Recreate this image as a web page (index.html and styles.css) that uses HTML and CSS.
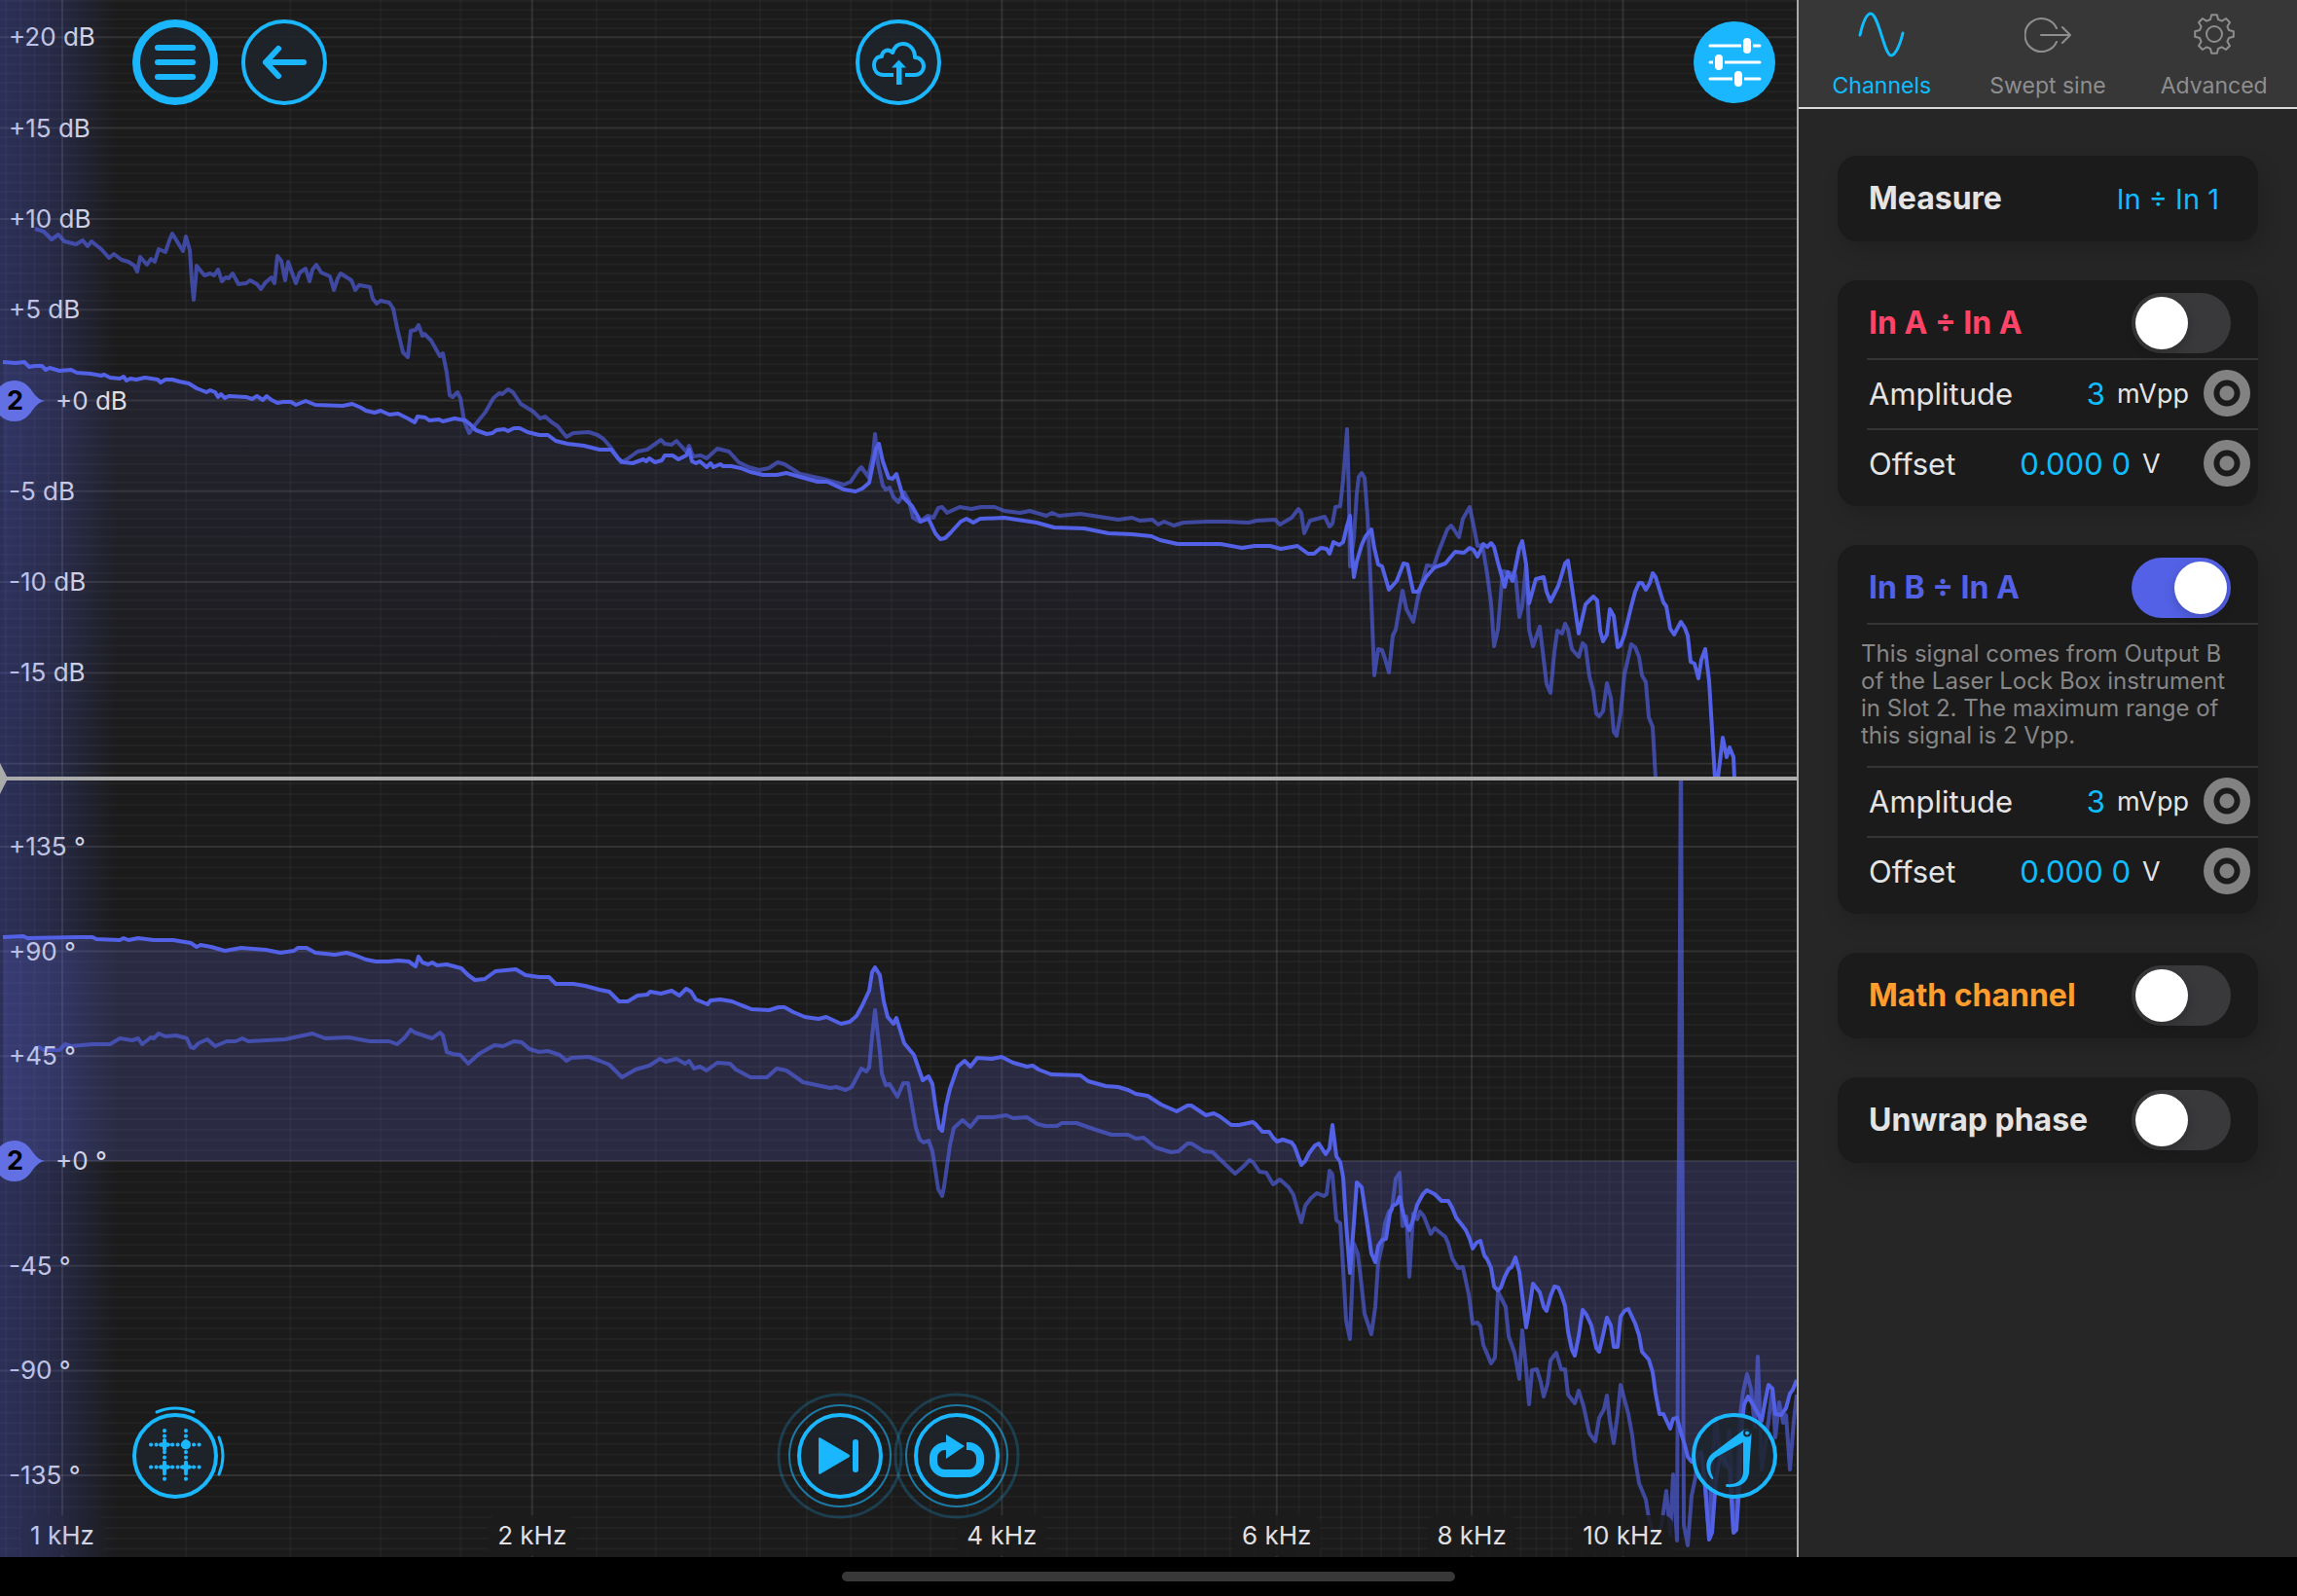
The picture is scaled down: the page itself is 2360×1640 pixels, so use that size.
FILE: index.html
```html
<!DOCTYPE html>
<html lang="en">
<head>
    <meta charset="UTF-8">
    <meta name="viewport" content="width=device-width, initial-scale=1.0">
    <title>Frequency Response Analyzer</title>
    <link rel="stylesheet" href="styles.css">
</head>
<body>
    <div class="app">
        <main class="plots">
            <section class="plot" id="magnitude" aria-label="Magnitude">
                <svg class="plot-svg" viewBox="0 0 1846 798" preserveAspectRatio="none">
                    <defs>
                        <linearGradient id="magFill" gradientUnits="userSpaceOnUse" x1="0" y1="370" x2="0" y2="798">
                            <stop offset="0" stop-color="#6b70e8" stop-opacity="0.1"/>
                            <stop offset="1" stop-color="#6b70e8" stop-opacity="0"/>
                        </linearGradient>
                    </defs>
                    <g class="grid"></g>
                    <path class="area" fill="url(#magFill)"/>
                    <polyline class="trace ghost" points="36,235 45,238 53,246 60,241 66,248 78,251 85,247 90,253 94,248 104,256 112,265 117,261 125,267 132,269 138,273 141,279 144,264 151,272 155,266 159,269 163,256 170,259 174,247 177,240 188,258 191,243 195,257 197,287 199,308 201,287 202,273 210,283 216,281 220,283 224,277 228,289 232,285 235,286 239,281 245,292 253,291 257,288 264,292 268,297 273,290 279,285 282,291 285,263 289,268 293,288 296,269 301,283 304,291 308,280 314,276 318,289 321,277 325,272 330,280 339,284 343,298 347,286 350,281 361,288 365,298 369,293 380,295 383,307 387,312 391,309 400,311 404,317 408,337 414,362 419,367 422,340 427,339 430,334 434,345 436,343 443,350 452,366 455,363 459,383 462,406 465,408 470,403 473,409 477,433 482,445 487,438 499,423 507,409 513,404 516,405 522,400 527,403 535,415 548,423 555,430 560,428 567,434 573,438 582,449 589,445 605,444 614,447 620,451 627,459 638,475 644,472 655,464 665,462 679,452 683,456 690,457 695,453 705,464 708,458 712,469 720,468 726,471 737,461 749,464 759,475 769,480 780,483 790,481 799,475 806,477 822,487 845,492 867,498 874,495 882,483 885,480 892,490 897,467 899,446 902,476 907,499 910,503 914,501 918,511 923,516 929,506 934,515 938,532 945,536 953,530 959,532 964,522 968,521 973,527 986,521 998,523 1008,521 1022,521 1032,525 1048,527 1058,525 1075,530 1081,527 1088,530 1110,528 1149,534 1163,532 1171,535 1184,534 1190,539 1196,536 1206,540 1216,537 1240,536 1260,536 1283,537 1291,535 1310,534 1315,539 1327,532 1334,523 1337,527 1340,548 1346,535 1361,531 1366,541 1369,538 1372,521 1377,520 1380,493 1384,441 1386,513 1387,582 1391,553 1394,507 1396,490 1399,486 1402,491 1405,530 1408,593 1412,694 1416,667 1420,668 1423,677 1427,691 1431,653 1434,647 1438,623 1441,607 1445,626 1452,639 1457,613 1466,581 1473,582 1478,567 1487,544 1491,540 1499,552 1503,533 1510,521 1514,540 1518,561 1523,560 1528,590 1532,620 1535,664 1539,647 1544,587 1550,588 1557,591 1561,634 1564,623 1568,580 1571,647 1575,664 1582,644 1589,703 1593,712 1597,670 1600,648 1605,651 1608,641 1611,647 1615,667 1622,675 1626,661 1629,664 1633,695 1637,710 1640,733 1643,736 1647,731 1651,702 1655,717 1658,752 1661,756 1665,733 1669,693 1676,662 1680,665 1684,675 1687,694 1691,701 1694,737 1698,747 1701,800"/>
                    <polyline class="trace live" points="3,372 16,373 25,372 30,377 36,376 43,376 47,380 51,378 61,381 73,380 79,383 93,384 104,386 107,385 113,388 123,389 127,387 130,391 134,389 140,390 149,388 162,390 165,393 170,390 177,390 184,392 194,394 202,399 212,403 216,401 221,403 224,408 227,405 231,409 235,407 253,408 259,410 264,407 270,411 274,407 279,411 285,414 291,413 299,413 304,416 314,412 324,416 352,417 362,415 371,419 376,422 385,424 391,422 400,426 409,425 419,430 426,434 429,428 437,429 441,432 451,431 455,433 467,430 478,432 482,435 489,442 500,446 506,445 510,442 518,441 522,443 528,440 534,440 542,444 554,447 563,447 571,453 583,456 600,458 616,462 628,462 635,471 640,475 650,476 661,472 664,474 667,471 673,475 680,473 683,468 691,468 697,472 705,468 708,462 711,474 715,476 719,474 726,480 730,476 733,480 740,477 743,479 751,479 761,481 771,485 784,488 798,488 808,486 822,490 840,495 850,495 867,503 879,505 886,502 893,496 897,476 900,461 903,456 907,474 913,491 917,492 921,487 928,511 937,520 946,536 954,533 961,548 966,554 971,553 977,547 987,536 993,533 1000,537 1007,533 1032,532 1045,534 1065,537 1083,542 1114,543 1139,548 1163,549 1183,551 1192,555 1210,559 1240,559 1254,559 1276,563 1289,561 1305,561 1316,564 1333,561 1344,569 1350,569 1357,563 1363,564 1366,569 1370,557 1376,560 1380,557 1384,540 1387,530 1389,567 1391,593 1394,577 1399,560 1403,551 1409,544 1412,563 1416,580 1420,582 1427,606 1435,597 1442,579 1446,580 1452,608 1457,608 1465,593 1474,583 1485,579 1495,567 1504,568 1510,563 1514,565 1518,572 1524,559 1528,562 1532,558 1535,562 1539,578 1546,603 1549,588 1554,597 1557,583 1561,563 1564,556 1568,580 1571,620 1578,595 1586,593 1589,608 1593,618 1601,602 1608,579 1611,576 1615,603 1622,651 1629,621 1637,613 1641,617 1644,648 1647,659 1651,652 1654,626 1658,633 1662,665 1665,663 1669,652 1676,623 1680,608 1684,599 1687,599 1691,606 1695,599 1698,589 1701,593 1709,619 1712,623 1716,646 1720,652 1727,639 1731,645 1734,653 1737,680 1741,682 1745,697 1748,678 1752,667 1756,700 1762,800 1765,800 1770,758 1774,778 1777,768 1781,778 1782,800"/>
                </svg>
            </section>

            <div class="divider"></div>

            <section class="plot" id="phase" aria-label="Phase">
                <svg class="plot-svg" viewBox="0 802 1846 798" preserveAspectRatio="none">
                    <g class="grid"></g>
                    <path class="area" fill="#6b70e8" fill-opacity="0.2"/>
                    <polyline class="trace ghost" points="36,1078 40,1076 45,1079 61,1079 67,1073 73,1075 95,1073 113,1073 123,1067 136,1069 142,1067 146,1073 155,1066 158,1067 163,1062 170,1065 181,1064 192,1067 196,1076 199,1077 204,1072 213,1068 221,1075 233,1070 242,1070 249,1067 255,1070 293,1068 302,1066 321,1062 334,1067 358,1066 380,1070 400,1070 408,1073 416,1066 422,1058 426,1061 435,1064 444,1067 452,1061 455,1064 459,1081 465,1083 473,1084 481,1093 492,1083 508,1074 517,1075 528,1070 536,1071 544,1078 554,1081 563,1080 575,1084 582,1090 587,1087 605,1086 616,1090 626,1094 639,1107 653,1099 667,1095 678,1088 684,1091 695,1088 704,1093 708,1090 713,1098 719,1096 726,1100 737,1092 750,1093 756,1099 771,1107 788,1107 798,1098 808,1100 825,1112 853,1118 859,1117 869,1120 875,1117 885,1098 890,1101 893,1097 896,1065 899,1038 904,1081 906,1103 910,1115 914,1114 922,1127 928,1113 933,1113 937,1136 941,1159 945,1171 949,1174 954,1172 958,1183 964,1222 968,1229 970,1219 976,1177 980,1159 989,1151 997,1158 1005,1148 1021,1148 1034,1146 1041,1149 1055,1148 1066,1155 1074,1157 1086,1157 1091,1154 1106,1154 1126,1161 1142,1166 1159,1166 1167,1170 1175,1169 1187,1179 1203,1184 1211,1183 1220,1175 1224,1175 1237,1183 1246,1184 1252,1190 1269,1206 1277,1199 1284,1192 1288,1195 1294,1204 1301,1205 1308,1217 1315,1212 1324,1220 1329,1228 1333,1243 1337,1256 1341,1239 1347,1231 1353,1226 1360,1229 1363,1227 1366,1203 1369,1207 1373,1254 1377,1257 1380,1303 1383,1357 1387,1376 1389,1327 1391,1278 1395,1288 1398,1313 1402,1350 1409,1371 1413,1343 1416,1297 1420,1280 1423,1257 1427,1245 1430,1243 1434,1211 1438,1205 1441,1260 1445,1250 1448,1312 1452,1247 1456,1253 1459,1245 1463,1250 1470,1268 1474,1262 1485,1271 1488,1278 1492,1293 1498,1303 1503,1302 1509,1330 1513,1360 1518,1359 1521,1363 1524,1382 1532,1401 1536,1395 1539,1327 1547,1343 1550,1373 1556,1390 1561,1417 1564,1367 1568,1407 1571,1443 1574,1408 1579,1407 1583,1420 1586,1435 1590,1422 1593,1398 1599,1390 1604,1407 1608,1407 1611,1433 1618,1442 1622,1429 1627,1445 1633,1473 1639,1481 1643,1457 1648,1448 1651,1434 1654,1460 1658,1483 1662,1453 1665,1423 1673,1453 1677,1475 1680,1500 1684,1524 1691,1541 1694,1560 1700,1580 1707,1568 1712,1532 1716,1577 1719,1515 1723,1583 1727,750 1730,1567 1734,1588 1738,1537 1742,1518 1745,1493 1748,1493 1752,1530 1756,1580 1759,1510 1763,1460 1767,1493 1772,1507 1777,1470 1781,1573 1784,1560 1788,1453 1791,1430 1795,1412 1799,1427 1803,1467 1806,1394 1810,1510 1813,1490 1817,1460 1821,1427 1824,1477 1828,1441 1832,1462 1835,1454 1839,1510 1843,1460 1846,1433"/>
                    <polyline class="trace live" points="3,963 24,962 28,964 79,963 95,963 99,965 123,966 127,964 132,966 142,964 158,966 178,966 196,969 202,973 206,971 217,973 231,977 248,974 273,976 288,979 302,977 306,974 315,974 324,979 344,981 356,979 366,982 376,986 386,988 399,988 409,987 420,988 427,993 430,983 434,989 440,991 444,989 449,992 459,991 474,995 481,1002 488,1007 498,1006 509,998 530,996 540,1002 554,1004 564,1004 571,1011 589,1011 601,1013 616,1017 626,1019 636,1029 645,1029 655,1023 665,1022 668,1019 679,1021 690,1018 698,1023 705,1016 710,1019 715,1027 727,1032 730,1028 740,1027 752,1029 772,1037 790,1038 800,1035 806,1035 815,1040 827,1045 841,1047 849,1045 864,1052 873,1050 880,1044 886,1033 893,1018 896,999 899,994 904,1002 908,1029 912,1045 918,1052 921,1046 929,1072 939,1084 948,1110 954,1106 958,1114 961,1136 965,1159 968,1162 972,1136 976,1119 984,1096 991,1090 997,1096 1004,1087 1019,1088 1029,1086 1041,1092 1055,1096 1061,1095 1067,1099 1080,1104 1110,1105 1118,1111 1136,1116 1149,1117 1159,1120 1167,1124 1179,1126 1193,1135 1209,1142 1220,1136 1224,1136 1230,1140 1239,1146 1247,1144 1253,1147 1265,1156 1273,1156 1287,1153 1290,1155 1297,1163 1304,1163 1308,1169 1312,1173 1318,1171 1327,1174 1330,1178 1337,1197 1341,1193 1345,1185 1351,1177 1355,1175 1362,1186 1366,1180 1369,1156 1373,1188 1377,1194 1380,1210 1383,1257 1387,1308 1391,1257 1394,1215 1399,1220 1404,1253 1409,1288 1413,1297 1416,1280 1420,1274 1424,1273 1428,1247 1431,1239 1435,1237 1438,1230 1442,1248 1445,1258 1448,1264 1452,1253 1456,1238 1462,1227 1466,1223 1474,1227 1481,1234 1488,1234 1492,1241 1496,1251 1506,1264 1510,1273 1513,1283 1517,1277 1521,1275 1525,1290 1528,1294 1532,1303 1535,1322 1539,1326 1542,1323 1546,1312 1550,1304 1553,1302 1557,1292 1561,1307 1568,1364 1571,1347 1575,1319 1582,1328 1586,1343 1589,1347 1593,1332 1597,1322 1601,1323 1604,1330 1608,1342 1611,1368 1615,1387 1618,1393 1622,1373 1626,1346 1630,1351 1635,1362 1640,1385 1643,1389 1647,1372 1651,1354 1655,1362 1658,1384 1662,1384 1665,1353 1669,1347 1673,1345 1680,1360 1684,1372 1687,1389 1694,1397 1698,1410 1701,1432 1705,1453 1709,1453 1716,1468 1719,1458 1723,1457 1727,1472 1731,1485 1734,1497 1738,1502 1748,1492 1752,1527 1756,1582 1759,1575 1763,1520 1768,1493 1777,1510 1781,1575 1784,1572 1787,1527 1790,1460 1792,1443 1796,1435 1802,1445 1810,1460 1813,1443 1817,1423 1821,1427 1824,1453 1830,1454 1835,1447 1839,1432 1842,1428 1846,1418"/>
                </svg>
            </section>

            <div class="toolbar toolbar-top">
                <div class="group group-left">
                    <button class="round" type="button" aria-label="Menu">
                        <svg viewBox="0 0 88 88"><circle class="disc" cx="44" cy="44" r="40" stroke-width="8"/><path d="M26 29H62M26 44H62M26 59H62" stroke-width="6"/></svg>
                    </button>
                    <button class="round" type="button" aria-label="Back">
                        <svg viewBox="0 0 88 88"><circle class="disc" cx="44" cy="44" r="42"/><path d="M64 44H25M38 30L25 44L38 58" stroke-width="6"/></svg>
                    </button>
                </div>
                <div class="group">
                    <button class="round" type="button" aria-label="Upload">
                        <svg viewBox="0 0 88 88"><circle class="disc" cx="44" cy="44" r="42"/><path d="M39 57H29C22 57 19 52 19 47C19 42 22 38 27 38C27 33 33 29 38 34C40 28 44 25 48.5 25C56 25 61 31 61 39C66 39 70 43 70 48C70 53 66 57 61 57H51" stroke-width="4" stroke-linecap="butt"/><path class="solid" d="M44.5 41.5L52 49.5H47.5V67H42V49.5H37Z"/></svg>
                    </button>
                </div>
                <div class="group group-right">
                    <button class="round" type="button" aria-label="Settings">
                        <svg class="sliders" viewBox="0 0 88 88"><circle class="solid" cx="44" cy="44" r="42"/><path d="M19 27H70M19 44H70M19 61H70" stroke-width="3"/><rect x="52" y="18" width="10" height="18" rx="5"/><rect x="23" y="35" width="10" height="18" rx="5"/><rect x="43" y="52" width="10" height="18" rx="5"/></svg>
                    </button>
                </div>
            </div>

            <div class="toolbar toolbar-bottom">
                <div class="group group-left">
                    <button class="round" type="button" aria-label="Grid">
                        <svg viewBox="0 0 88 88"><circle class="disc" cx="44" cy="44" r="42"/><path d="M33 18V71M55 18V71M19 32.5H72M19 55.5H72" stroke-width="4" stroke-dasharray="0.2 5.3"/><path d="M33 28V37M33 51V60M55 51V60M29 32.5H37M29 55.5H37M51 55.5H59" stroke-width="4"/><circle class="solid" cx="55" cy="32.5" r="5"/><path d="M25 -1A49 49 0 0 1 63 -1M89 25A49 49 0 0 1 89 63" stroke-width="3"/></svg>
                    </button>
                </div>
                <div class="group group-center">
                    <button class="round" type="button" aria-label="Single sweep">
                        <svg viewBox="0 0 88 88"><circle class="ring ring-far" cx="44" cy="44" r="63"/><circle class="ring" cx="44" cy="44" r="52"/><circle class="disc" cx="44" cy="44" r="42"/><path class="solid" d="M22 26.5Q22 24.5 24 25.5L53 42.5Q55 44 53 45.5L24 62.5Q22 63.5 22 61.5Z"/><path d="M60 30V58" stroke-width="6"/></svg>
                    </button>
                    <button class="round" type="button" aria-label="Continuous sweep">
                        <svg viewBox="0 0 88 88"><circle class="ring ring-far" cx="44" cy="44" r="63"/><circle class="ring" cx="44" cy="44" r="52"/><circle class="disc" cx="44" cy="44" r="42"/><path d="M54 34H56A12 12 0 0 1 68 46V50A12 12 0 0 1 56 62H32A12 12 0 0 1 20 50V46A12 12 0 0 1 32 34H38" stroke-width="8" stroke-linecap="butt"/><path class="solid" d="M33 22L52 34L33 47Z"/></svg>
                    </button>
                </div>
                <div class="group group-right">
                    <button class="round" type="button" aria-label="Measurements">
                        <svg viewBox="0 0 88 88"><circle class="disc" cx="44" cy="44" r="42"/><path class="solid" d="M54 17L22 41C14 47 13 58 20 67Q22 69 22.500 67C18 59 18 51 25 45.500L53 30L53 60C53 69 46 74 36 73Q34 74.500 36 76C49 77 58 72 59 61L61.500 22Q60 15 54 17Z"/><circle class="pivot" cx="57" cy="20.500" r="3"/></svg>
                    </button>
                </div>
            </div>
        </main>

        <aside class="sidebar">
            <nav class="tabs">
                <button class="tab active" type="button">
                    <svg viewBox="0 0 48 48"><path d="M2 25C5 12 9 3 13 3C21 3 27 46 34 46C38 46 43 36 46 23" stroke-width="3"/></svg>
                    Channels
                </button>
                <button class="tab" type="button">
                    <svg viewBox="0 0 48 48"><path d="M33 18A17 17 0 1 0 33 32M17 25H47M39 17L47 25L39 33" stroke-width="2"/></svg>
                    Swept sine
                </button>
                <button class="tab" type="button">
                    <svg viewBox="0 0 48 48"><path id="gear" stroke-width="2"/><circle cx="24" cy="24" r="8" stroke-width="2"/></svg>
                    Advanced
                </button>
            </nav>

            <div class="cards">
                <section class="card">
                    <div class="row">
                        <h2>Measure</h2>
                        <button class="choice" type="button">In ÷ In 1</button>
                    </div>
                </section>

                <section class="card">
                    <div class="row">
                        <label class="title channel-a" for="chA">In A ÷ In A</label>
                        <input class="toggle" type="checkbox" id="chA">
                    </div>
                    <div class="row param">
                        <label for="ampA">Amplitude</label>
                        <input class="value" type="text" id="ampA" value="3">
                        <span class="unit">mVpp</span>
                        <button class="knob" type="button" aria-label="Adjust amplitude"></button>
                    </div>
                    <div class="row param">
                        <label for="offA">Offset</label>
                        <input class="value" type="text" id="offA" value="0.000 0">
                        <span class="unit">V</span>
                        <button class="knob" type="button" aria-label="Adjust offset"></button>
                    </div>
                </section>

                <section class="card">
                    <div class="row">
                        <label class="title channel-b" for="chB">In B ÷ In A</label>
                        <input class="toggle" type="checkbox" id="chB" checked>
                    </div>
                    <p class="note">This signal comes from Output B of the Laser Lock Box instrument in Slot 2. The maximum range of this signal is 2 Vpp.</p>
                    <div class="row param">
                        <label for="ampB">Amplitude</label>
                        <input class="value" type="text" id="ampB" value="3">
                        <span class="unit">mVpp</span>
                        <button class="knob" type="button" aria-label="Adjust amplitude"></button>
                    </div>
                    <div class="row param">
                        <label for="offB">Offset</label>
                        <input class="value" type="text" id="offB" value="0.000 0">
                        <span class="unit">V</span>
                        <button class="knob" type="button" aria-label="Adjust offset"></button>
                    </div>
                </section>

                <section class="card">
                    <div class="row">
                        <label class="title channel-math" for="math">Math channel</label>
                        <input class="toggle" type="checkbox" id="math">
                    </div>
                </section>

                <section class="card">
                    <div class="row">
                        <label class="title" for="unwrap">Unwrap phase</label>
                        <input class="toggle" type="checkbox" id="unwrap">
                    </div>
                </section>
            </div>
        </aside>
    </div>
    <footer class="home-bar"><div class="home-indicator"></div></footer>

    <script src="script.js"></script>
</body>
</html>
```

FILE: styles.css
```css
* {
    box-sizing: border-box;
}

body {
    margin: 0;
    height: 100vh;
    display: flex;
    flex-direction: column;
    background: #000;
    color: #e4e4e4;
    font-family: Inter, "Liberation Sans", sans-serif;
    overflow: hidden;
}

button, input {
    font-family: inherit;
    margin: 0;
    padding: 0;
    border: none;
    background: none;
    color: inherit;
}

.app {
    flex: 1;
    min-height: 0;
    display: grid;
    grid-template-columns: 1fr 514px;
}

/* Plots */
.plots {
    position: relative;
    display: flex;
    flex-direction: column;
    min-width: 0;
    background: #1b1b1b;
}

.plot {
    position: relative;
    flex: 1;
    min-height: 0;
    overflow: hidden;
}

/* Blue shade along the scale, drawn over its labels */
.plot::after {
    content: "";
    position: absolute;
    inset: 0 auto 0 0;
    z-index: 1;
    width: 120px;
    background: linear-gradient(to right, rgba(83, 97, 230, 0.3), rgba(83, 97, 230, 0.2) 50%, rgba(83, 97, 230, 0));
    pointer-events: none;
}

.plot-svg {
    display: block;
    width: 100%;
    height: 100%;
}

.grid line {
    stroke: #fff;
    stroke-width: 2;
    stroke-opacity: 0.03;
    vector-effect: non-scaling-stroke;
}

.grid .major {
    stroke-opacity: 0.1;
}

.trace {
    fill: none;
    stroke: #5361e6;
    stroke-width: 4;
    stroke-linejoin: round;
    vector-effect: non-scaling-stroke;
}

.ghost {
    stroke-opacity: 0.65;
}

.divider {
    position: relative;
    flex: none;
    height: 4px;
    background: #aaa;
}

.divider::before {
    content: "";
    position: absolute;
    left: 0;
    top: -14px;
    z-index: 2;
    width: 8px;
    height: 32px;
    background: #aaa;
    clip-path: polygon(0 0, 100% 50%, 0 100%);
}

.y-label, .x-label {
    position: absolute;
    z-index: 1;
    font-size: 26px;
    line-height: 42px;
    white-space: nowrap;
    color: #e0e0e4;
}

.y-label {
    left: 9px;
    transform: translateY(-50%);
}

.y-label.zero {
    left: 57px;
}

.x-label {
    bottom: 1px;
    padding: 0 10px;
    border-radius: 10px;
    background: rgba(27, 27, 27, 0.85);
    transform: translateX(-50%);
}

.marker {
    position: absolute;
    left: 0;
    z-index: 2;
    width: 46px;
    height: 42px;
    padding-left: 7px;
    transform: translateY(-50%);
    color: #000;
    font-size: 27px;
    font-weight: 700;
    line-height: 42px;
}

.marker svg {
    position: absolute;
    inset: 0;
    z-index: -1;
    fill: #6270e4;
}

/* Round buttons */
.toolbar {
    position: absolute;
    left: 20px;
    right: 20px;
    z-index: 3;
    display: grid;
    grid-template-columns: 1fr auto 1fr;
}

.toolbar-top {
    top: 20px;
}

.toolbar-bottom {
    bottom: 60px;
}

.group {
    display: flex;
    gap: 24px;
}

.group-left {
    padding-left: 116px;
}

.group-center {
    gap: 32px;
}

.group-right {
    justify-content: flex-end;
}

.round {
    width: 88px;
    height: 88px;
    border-radius: 50%;
    cursor: pointer;
}

.round svg {
    display: block;
    overflow: visible;
    fill: none;
    stroke: #1ab7ff;
    stroke-width: 4;
    stroke-linecap: round;
    stroke-linejoin: round;
}

.round .disc {
    fill: rgba(29, 36, 43, 0.85);
}

.round .solid {
    fill: #1ab7ff;
    stroke: none;
}

.round .ring {
    stroke-width: 2;
    stroke-opacity: 0.6;
}

.round .ring-far {
    stroke-width: 3;
    stroke-opacity: 0.22;
}

.round .pivot {
    fill: #1ab7ff;
    stroke: #1d242b;
    stroke-width: 2;
}

.round .sliders {
    stroke: #fff;
}

.sliders rect {
    fill: #fff;
    stroke: #1ab7ff;
    stroke-width: 2;
}

/* Sidebar */
.sidebar {
    display: flex;
    flex-direction: column;
    border-left: 2px solid #aaa;
    background: #262626;
}

.tabs {
    display: grid;
    grid-template-columns: repeat(3, 1fr);
    height: 112px;
    border-bottom: 2px solid #d8d8d8;
    background: #373737;
}

.tab {
    display: flex;
    flex-direction: column;
    align-items: center;
    gap: 15px;
    padding-top: 11px;
    color: #8e8e8e;
    font-size: 23px;
    line-height: 28px;
    cursor: pointer;
}

.tab svg {
    width: 48px;
    height: 48px;
    fill: none;
    stroke: currentColor;
    stroke-linecap: round;
    stroke-linejoin: round;
}

.tab.active {
    color: #0fbdff;
}

.cards {
    display: flex;
    flex-direction: column;
    gap: 40px;
    padding: 48px 40px;
}

.card {
    padding: 8px 0;
    border-radius: 20px;
    background: #1b1b1b;
    box-shadow: 6px 10px 20px rgba(0, 0, 0, 0.15);
}

.row {
    display: flex;
    align-items: center;
    justify-content: space-between;
    height: 72px;
    padding: 0 28px 0 32px;
}

h2, .title {
    margin: 0;
    font-size: 32px;
    font-weight: 700;
    line-height: 40px;
}

.channel-a {
    color: #ff4468;
}

.channel-b {
    color: #5361e6;
}

.channel-math {
    color: #ff9e2f;
}

.choice {
    padding-right: 12px;
    color: #0fbdff;
    font-size: 29px;
    cursor: pointer;
}

.toggle {
    appearance: none;
    flex: none;
    width: 102px;
    height: 62px;
    border-radius: 31px;
    background: #39393b;
    cursor: pointer;
}

.toggle::before {
    content: "";
    display: block;
    width: 54px;
    height: 54px;
    margin: 4px;
    border-radius: 50%;
    background: #fff;
    box-shadow: 0 4px 12px rgba(0, 0, 0, 0.2);
}

.toggle:checked {
    background: #5361e6;
}

.toggle:checked::before {
    margin-left: 44px;
}

.param {
    padding: 0 8px 2px 2px;
    margin-left: 30px;
    border-top: 2px solid #343434;
    font-size: 31px;
}

.value {
    flex: 1;
    min-width: 0;
    color: #0fbdff;
    font-size: 31px;
    text-align: right;
}

.unit {
    min-width: 48px;
    margin: 0 15px 0 12px;
    font-size: 27px;
}

.knob {
    flex: none;
    width: 48px;
    height: 48px;
    border-radius: 50%;
    background: radial-gradient(circle, #828282 7px, #1b1b1b 8px, #1b1b1b 13px, #828282 14px);
    cursor: pointer;
}

.note {
    margin: 0 0 0 24px;
    padding: 0 20px 17px 0;
    color: #868686;
    font-size: 24px;
    line-height: 28px;
}

.note::before {
    content: "";
    display: block;
    height: 2px;
    margin: 0 -20px 16px 6px;
    background: #343434;
}

/* Bottom of the screen */
.home-bar {
    display: flex;
    justify-content: center;
    align-items: center;
    height: 40px;
}

.home-indicator {
    width: 630px;
    height: 10px;
    border-radius: 5px;
    background: #383838;
}
```

FILE: script.js
```js
const SVG = "http://www.w3.org/2000/svg";
const WIDTH = 1846;
const HEIGHT = 798;

// Log frequency axis, kHz
function freqToX(f) {
    return 64 + Math.log2(f) * 482.7;
}

function addLine(group, x1, y1, x2, y2, major) {
    const line = document.createElementNS(SVG, "line");
    line.setAttribute("x1", x1);
    line.setAttribute("y1", y1);
    line.setAttribute("x2", x2);
    line.setAttribute("y2", y2);
    if (major) line.setAttribute("class", "major");
    group.appendChild(line);
}

function addDiv(parent, className, text) {
    const div = document.createElement("div");
    div.className = className;
    div.innerHTML = text;
    parent.appendChild(div);
    return div;
}

function buildPlot(opt) {
    const plot = document.getElementById(opt.id);
    const group = plot.querySelector(".grid");
    const bottom = opt.top + HEIGHT;

    // Vertical lines
    const freqs = [0.92, 0.94, 0.96, 0.98];
    for (let f = 10; f <= 100; f += 2) freqs.push(f / 10);
    freqs.push(12);
    freqs.forEach(f => {
        const x = freqToX(f);
        addLine(group, x, opt.top, x, bottom, [1, 2, 4, 6, 8, 10].includes(f));
    });

    // Horizontal lines, ten to a division
    for (let i = -50; i <= 50; i++) {
        const y = opt.zero + i * opt.division / 10;
        if (y > opt.top && y < bottom) addLine(group, 0, y, WIDTH, y, i % 10 === 0);
    }

    // Scale
    opt.labels.forEach((text, i) => {
        const y = opt.zero + (i - opt.labels.indexOf(opt.zeroLabel)) * opt.division;
        const label = addDiv(plot, "y-label" + (text === opt.zeroLabel ? " zero" : ""), text);
        label.style.top = (y - opt.top) / HEIGHT * 100 + "%";
    });

    const marker = addDiv(plot, "marker", '<svg viewBox="0 0 46 42"><path d="M0 6Q6 0 15 0C24 0 29 5 33 11Q39 20 46 21Q39 22 33 31C29 37 24 42 15 42Q6 42 0 36Z"/></svg>2');
    marker.style.top = (opt.zero - opt.top) / HEIGHT * 100 + "%";

    // Shade between the live trace and the baseline
    const points = plot.querySelector(".live").getAttribute("points");
    const first = points.split(",")[0];
    const last = points.split(" ").pop().split(",")[0];
    plot.querySelector(".area").setAttribute("d", `M${first},${opt.base} L${points} L${last},${opt.base}Z`);
}

buildPlot({
    id: "magnitude",
    top: 0,
    zero: 411.5,
    division: 93.3,
    base: 800,
    zeroLabel: "+0 dB",
    labels: ["+20 dB", "+15 dB", "+10 dB", "+5 dB", "+0 dB", "-5 dB", "-10 dB", "-15 dB"]
});

buildPlot({
    id: "phase",
    top: 802,
    zero: 1193,
    division: 107.7,
    base: 1193,
    zeroLabel: "+0 °",
    labels: ["+135 °", "+90 °", "+45 °", "+0 °", "-45 °", "-90 °", "-135 °"]
});

[1, 2, 4, 6, 8, 10].forEach(f => {
    const label = addDiv(document.getElementById("phase"), "x-label", f + " kHz");
    label.style.left = freqToX(f) / WIDTH * 100 + "%";
});

// Gear outline with eight teeth
let gear = "";
for (let i = 0; i < 8; i++) {
    const step = [[-15, 15.5], [-8, 20], [8, 20], [15, 15.5]];
    step.forEach(([deg, r]) => {
        const a = (i * 45 + deg) * Math.PI / 180;
        gear += (gear ? "L" : "M") + (24 + r * Math.sin(a)).toFixed(1) + " " + (24 - r * Math.cos(a)).toFixed(1);
    });
}
document.getElementById("gear").setAttribute("d", gear + "Z");
```
